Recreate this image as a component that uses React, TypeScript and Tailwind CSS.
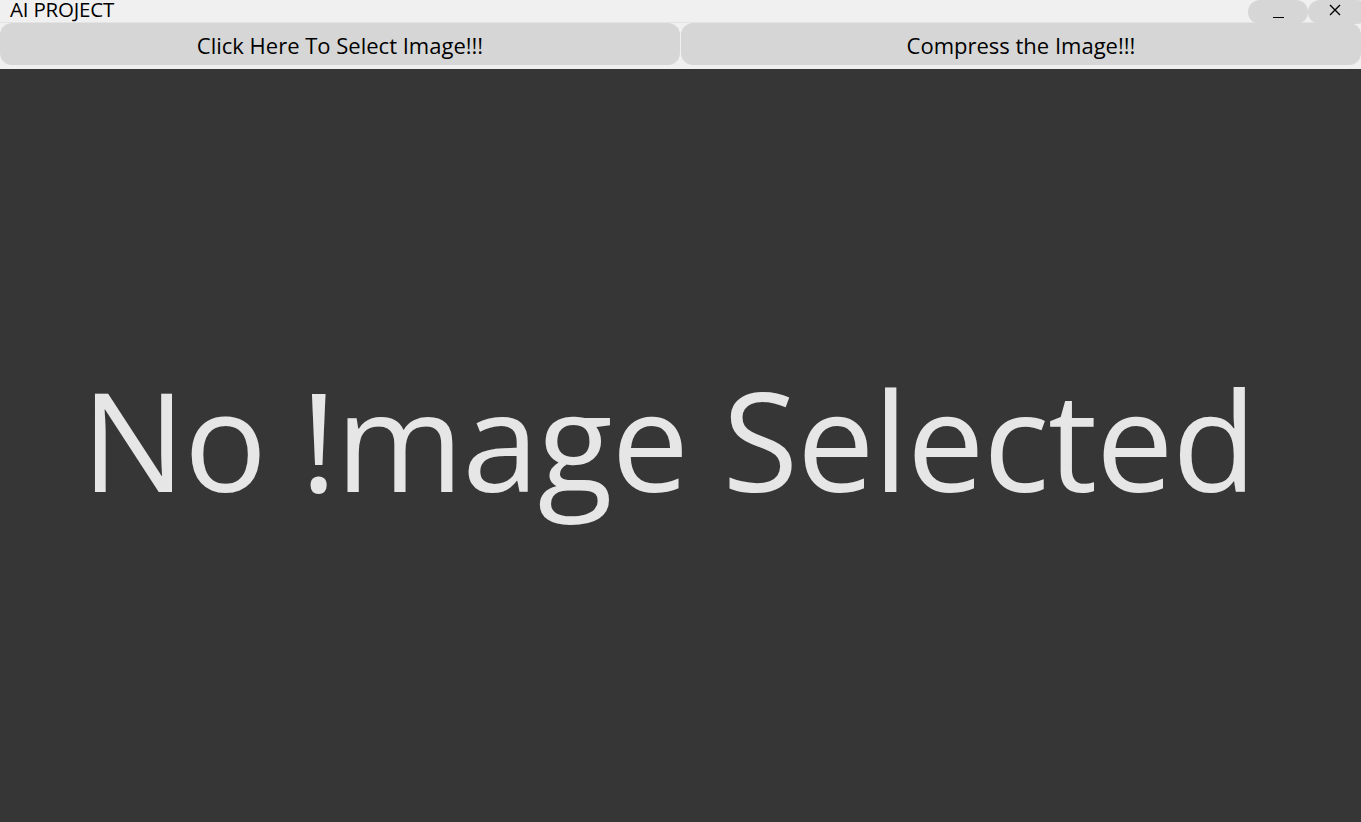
import React from "react";

export default function App() {
  return (
    <div
      className="flex h-[822px] w-[1361px] flex-col overflow-hidden bg-[#f0f0f0] text-black"
      style={{ fontFamily: '"Open Sans", "Noto Sans", sans-serif' }}
    >
      <div className="flex h-[23px] items-start justify-between border-b border-[#e4e4e4]">
        <div className="pl-[10px] text-[20.5px] leading-[18px] tracking-[-0.2px]">AI PROJECT</div>
        <div className="flex h-full items-start">
          <button className="flex h-[24px] w-[60px] items-end justify-center rounded-full bg-[#d6d6d6] pb-[6px]">
            <span className="block h-[1.5px] w-[11px] bg-black" />
          </button>
          <button className="-mr-[8px] flex h-[24px] w-[61px] items-start justify-center rounded-full bg-[#d6d6d6] pt-[4px] pr-[8px]">
            <svg width="12" height="12" viewBox="0 0 12 12" stroke="black" strokeWidth="1.4">
              <path d="M1 1 L11 11 M11 1 L1 11" />
            </svg>
          </button>
        </div>
      </div>

      <div className="flex h-[42px] gap-[1px]">
        <button className="flex-1 rounded-[12px] bg-[#d6d6d6] pt-[2px] text-[22px]">Click Here To Select Image!!!</button>
        <button className="flex-1 rounded-[12px] bg-[#d6d6d6] pt-[2px] text-[22px]">Compress the Image!!!</button>
      </div>

      <div className="mt-[4px] flex flex-1 items-center justify-center bg-[#363636] pr-[24px] pb-[16px]">
        <div className="text-[138px] leading-none tracking-[-1.2px] text-[#e6e6e6]">No !mage Selected</div>
      </div>
    </div>
  );
}
